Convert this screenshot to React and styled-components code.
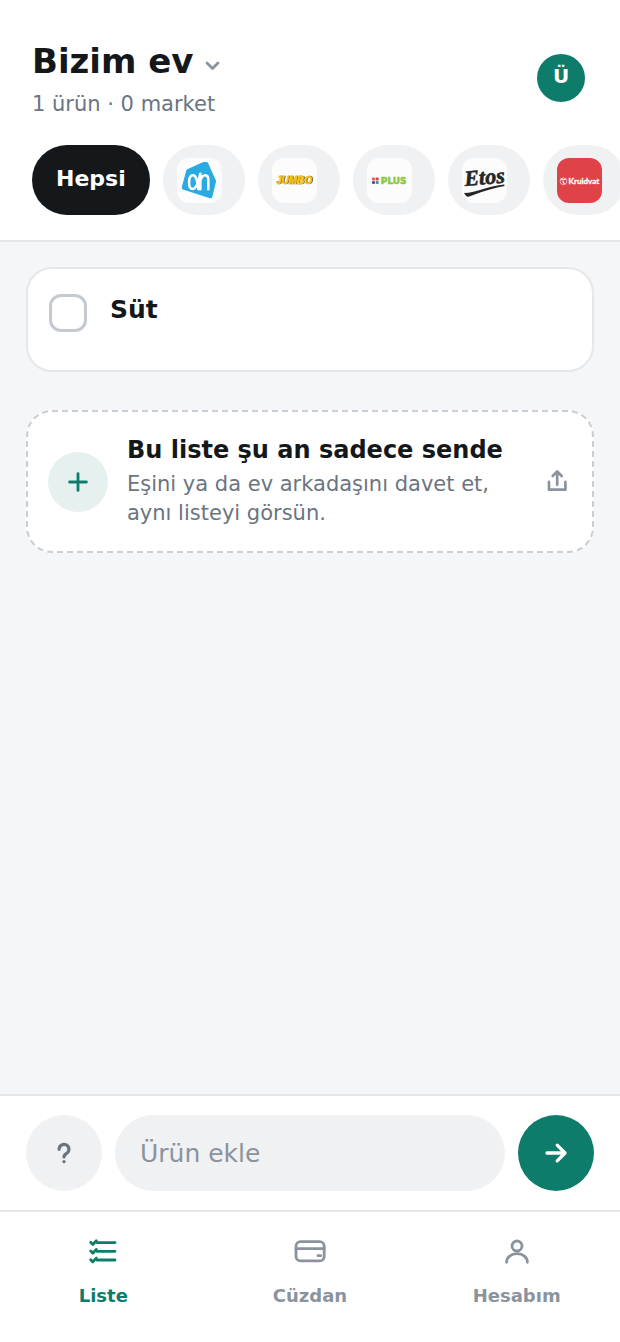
import React, { useState } from "react";
import styled, { createGlobalStyle } from "styled-components";

const GlobalStyle = createGlobalStyle`
    * {
        box-sizing: border-box;
    }
    body {
        margin: 0;
        background: #f4f6f8;
        color: #14181b;
        font-family: "DejaVu Sans", sans-serif;
    }
    button,
    input {
        font-family: inherit;
    }
    button {
        border: 0;
        padding: 0;
        cursor: pointer;
    }
`;

const Page = styled.div`
    display: flex;
    flex-direction: column;
    min-height: 100vh;
`;

const Header = styled.header`
    background: #fff;
    border-bottom: 2px solid #e4e7eb;
    padding: 39px 0 25px 32px;
`;

const TopRow = styled.div`
    display: flex;
    align-items: center;
    justify-content: space-between;
    padding-right: 35px;
    margin-bottom: 28px;
`;

const Title = styled.h1`
    margin: 0 0 8px;
    font-size: 34px;
    line-height: 44px;
`;

const TitleButton = styled.button`
    display: flex;
    align-items: center;
    gap: 8px;
    background: none;
    color: inherit;
    font-size: inherit;
    font-weight: 700;
    line-height: inherit;

    svg {
        color: #8a939e;
        margin-top: 8px;
    }
`;

const Subtitle = styled.p`
    margin: 0;
    color: #6b7580;
    font-size: 21px;
    line-height: 26px;
`;

const Avatar = styled.button`
    width: 48px;
    height: 48px;
    padding-bottom: 4px;
    border-radius: 50%;
    background: #0e7c6a;
    color: #fff;
    font-size: 20px;
    font-weight: 700;
`;

const Chips = styled.div`
    display: flex;
    gap: 13px;
    overflow-x: auto;
    scrollbar-width: none;
`;

const Chip = styled.button`
    flex: none;
    height: 70px;
    border-radius: 35px;
    background: #f0f1f3;
`;

const AllChip = styled(Chip)`
    padding: 0 24px 3px;
    background: #14181b;
    color: #fff;
    font-size: 22px;
    font-weight: 700;
`;

const StoreChip = styled(Chip)`
    width: 82px;
    padding-left: 14px;
`;

const LogoBox = styled.span`
    display: block;
    width: 45px;
    height: 45px;
    border-radius: 12px;
    overflow: hidden;
    background: ${props => props.$color || "#fcfcfd"};

    svg {
        display: block;
    }
`;

const JumboText = styled.text`
    fill: #fcc419;
    stroke: #fcc419;
    stroke-width: 0.5px;
    font: italic 700 10px "Liberation Sans", sans-serif;
    filter: drop-shadow(1px 0.5px 0 #6f6a4c);
`;

const Main = styled.main`
    flex: 1;
    display: flex;
    flex-direction: column;
    gap: 38px;
    padding: 25px 26px;
`;

const Items = styled.ul`
    list-style: none;
    margin: 0;
    padding: 0;
`;

const Item = styled.li`
    min-height: 105px;
    padding: 25px 21px;
    background: #fff;
    border: 2px solid #e4e7eb;
    border-radius: 26px;
`;

const ItemLabel = styled.label`
    display: flex;
    align-items: flex-start;
    gap: 23px;
    font-size: 25px;
    font-weight: 700;
    line-height: 32px;
`;

const Checkbox = styled.input`
    appearance: none;
    flex: none;
    width: 38px;
    height: 38px;
    margin: 0;
    border: 3px solid #c5cad1;
    border-radius: 12px;

    &:checked {
        background: #0e7c6a;
        border-color: #0e7c6a;
    }
`;

const Invite = styled.button`
    display: flex;
    align-items: center;
    gap: 19px;
    width: 100%;
    min-height: 143px;
    padding: 23px 21px 23px 20px;
    background: #fff;
    border: 2px dashed #c9ced4;
    border-radius: 26px;
    color: inherit;
    text-align: left;
`;

const PlusCircle = styled.span`
    flex: none;
    display: grid;
    place-items: center;
    width: 60px;
    height: 60px;
    border-radius: 50%;
    background: #e6f1ef;
    color: #0e7c6a;
`;

const InviteText = styled.span`
    flex: 1;
    display: flex;
    flex-direction: column;
    gap: 6px;
    color: #6b7580;
    font-size: 21px;
    line-height: 29px;

    strong {
        color: #14181b;
        font-size: 24px;
        line-height: 28px;
    }
`;

const ShareIcon = styled.span`
    flex: none;
    display: flex;
    color: #8a939e;
`;

const AddBar = styled.form`
    display: flex;
    gap: 13px;
    padding: 19px 26px;
    background: #fff;
    border-top: 2px solid #e4e7eb;
`;

const RoundButton = styled.button`
    flex: none;
    display: grid;
    place-items: center;
    width: 76px;
    height: 76px;
    border-radius: 50%;
    background: ${props => (props.$primary ? "#0e7c6a" : "#f0f1f3")};
    color: ${props => (props.$primary ? "#fff" : "#6b7580")};
`;

const AddInput = styled.input`
    flex: 1;
    min-width: 0;
    height: 76px;
    padding: 0 25px;
    border: 0;
    border-radius: 38px;
    background: #f0f1f3;
    color: #14181b;
    font-size: 25px;

    &::placeholder {
        color: #8a939e;
        opacity: 1;
    }
`;

const Nav = styled.nav`
    display: grid;
    grid-template-columns: repeat(3, 1fr);
    padding: 23px 0 35px;
    background: #fff;
    border-top: 2px solid #e4e7eb;
`;

const NavLink = styled.a`
    display: flex;
    flex-direction: column;
    align-items: center;
    gap: 18px;
    color: ${props => (props.$active ? "#0e7c6a" : "#8a939e")};
    font-size: 18px;
    font-weight: 700;
    line-height: 22px;
    text-decoration: none;
`;

const Icon = ({ size, stroke, children }) => (
    <svg
        width={size}
        height={size}
        viewBox={`0 0 ${size} ${size}`}
        fill="none"
        stroke="currentColor"
        strokeWidth={stroke}
        strokeLinecap="round"
        strokeLinejoin="round"
        aria-hidden="true"
    >
        {children}
    </svg>
);

const AhLogo = () => (
    <svg width="45" height="45" viewBox="0 0 45 45">
        <path
            d="M27 5.6 11 12.7 6.4 29.8 33.6 38.6 37.4 23.2 29.5 5.6Z"
            fill="#29abe2"
            stroke="#29abe2"
            strokeWidth="3.4"
            strokeLinejoin="round"
        />
        <path
            d="M23.3 31.2V15.8C22.5 21 19.500 31 15.600 31c-2.400 0-3.500-2.600-3.500-6.600s1.200-7.200 3.900-7.200c3.400 0 4.500 6.600 5.400 14M23.300 22.500c1.200-3.600 3-5.300 5-5.300 2.600 0 3 2.200 3 5v9"
            fill="none"
            stroke="#fff"
            strokeWidth="2.6"
            strokeLinecap="round"
            strokeLinejoin="round"
        />
    </svg>
);

const JumboLogo = () => (
    <svg width="45" height="45" viewBox="0 0 45 45">
        <JumboText x="22" y="26" textAnchor="middle">
            JUMBO
        </JumboText>
    </svg>
);

const PlusLogo = () => (
    <svg width="45" height="45" viewBox="0 0 45 45">
        <rect x="5" y="19.4" width="3" height="3" rx="1" fill="#e8594f" />
        <rect x="8.7" y="19.4" width="3" height="3" rx="1" fill="#d9405c" />
        <rect x="5" y="23" width="3" height="3" rx="1" fill="#5a4a9c" />
        <rect x="8.7" y="23" width="3" height="3" rx="1" fill="#35a08c" />
        <text
            x="13.8"
            y="25.8"
            fill="#8cc63f"
            stroke="#8cc63f"
            strokeWidth="0.5"
            fontFamily="DejaVu Sans, sans-serif"
            fontWeight="700"
            fontSize="9"
        >
            PLUS
        </text>
    </svg>
);

const EtosLogo = () => (
    <svg width="45" height="45" viewBox="0 0 45 45">
        <text
            x="3"
            y="28"
            fill="#262626"
            stroke="#262626"
            strokeWidth="0.6"
            fontFamily="Liberation Serif, serif"
            fontStyle="italic"
            fontWeight="700"
            fontSize="22"
            transform="rotate(-5 3 28)"
        >
            Etos
        </text>
        <path
            d="M2 35C14 34.500 28 27.500 42 26.400c1 0 .6 1.600-.4 1.800C27 31 18 34.500 6.500 38.800 4 39 3.600 37 2 35Z"
            fill="#262626"
        />
    </svg>
);

const KruidvatLogo = () => (
    <svg width="45" height="45" viewBox="0 0 45 45">
        <circle cx="6.500" cy="23.300" r="3.400" fill="none" stroke="#f2b3b5" strokeWidth="1" />
        <path
            d="M3.600 21.400c2-1 3 .5 5 0M6 22.500c-.5 1.500.5 2.500 1.500 3.500"
            fill="none"
            stroke="#fff"
            strokeWidth="1.200"
        />
        <text
            x="11.500"
            y="26.300"
            fill="#fff"
            stroke="#fff"
            strokeWidth="0.300"
            fontFamily="Lato, sans-serif"
            fontWeight="700"
            fontSize="8"
        >
            Kruidvat
        </text>
    </svg>
);

const stores = [
    { name: "Albert Heijn", Logo: AhLogo },
    { name: "Jumbo", Logo: JumboLogo },
    { name: "Plus", Logo: PlusLogo },
    { name: "Etos", Logo: EtosLogo },
    { name: "Kruidvat", Logo: KruidvatLogo, color: "#e04347" }
];

const App = () => {
    const [done, setDone] = useState(false);
    const [text, setText] = useState("");

    return (
        <Page>
            <GlobalStyle />
            <Header>
                <TopRow>
                    <div>
                        <Title>
                            <TitleButton type="button">
                                Bizim ev
                                <Icon size={20} stroke={2.8}>
                                    <path d="M5 8l5.500 5.500L16 8" />
                                </Icon>
                            </TitleButton>
                        </Title>
                        <Subtitle>1 ürün · 0 market</Subtitle>
                    </div>
                    <Avatar type="button">Ü</Avatar>
                </TopRow>
                <Chips>
                    <AllChip type="button">Hepsi</AllChip>
                    {stores.map(({ name, Logo, color }) => (
                        <StoreChip key={name} type="button" aria-label={name}>
                            <LogoBox $color={color}>
                                <Logo />
                            </LogoBox>
                        </StoreChip>
                    ))}
                </Chips>
            </Header>

            <Main>
                <Items>
                    <Item>
                        <ItemLabel htmlFor="item-sut">
                            <Checkbox
                                id="item-sut"
                                type="checkbox"
                                checked={done}
                                onChange={() => setDone(!done)}
                            />
                            Süt
                        </ItemLabel>
                    </Item>
                </Items>
                <Invite type="button">
                    <PlusCircle>
                        <Icon size={24} stroke={2.8}>
                            <path d="M12 3.600v16.800M3.600 12h16.800" />
                        </Icon>
                    </PlusCircle>
                    <InviteText>
                        <strong>Bu liste şu an sadece sende</strong>
                        <span>
                            Eşini ya da ev arkadaşını davet et, aynı listeyi
                            görsün.
                        </span>
                    </InviteText>
                    <ShareIcon>
                        <Icon size={28} stroke={2.7}>
                            <path d="M6 13.800v7.900h16.400v-7.900M14.200 16.800V4M9.700 8l4.500-4.500L18.700 8" />
                        </Icon>
                    </ShareIcon>
                </Invite>
            </Main>

            <AddBar onSubmit={e => e.preventDefault()}>
                <RoundButton type="button" aria-label="Yardım">
                    <Icon size={24} stroke={3.2}>
                        <path d="M7.100 8.300a4.900 4.900 0 1 1 7.500 4.100c-1.800 1.100-2.600 1.900-2.600 3.600" />
                        <path d="M12 20.600v.1" />
                    </Icon>
                </RoundButton>
                <AddInput
                    type="text"
                    aria-label="Ürün ekle"
                    placeholder="Ürün ekle"
                    value={text}
                    onChange={e => setText(e.target.value)}
                />
                <RoundButton type="submit" $primary aria-label="Ekle">
                    <Icon size={24} stroke={3.3}>
                        <path d="M3 12h18M13.200 4.200l7.800 7.800-7.800 7.800" />
                    </Icon>
                </RoundButton>
            </AddBar>

            <Nav>
                <NavLink href="#liste" $active>
                    <Icon size={32} stroke={2.8}>
                        <path d="M10 7.600H28M10 16.300H28M10 25H28" />
                        <path d="M3.700 7.300l2.200 2.200 3.400-3.800M3.700 16l2.200 2.200 3.400-3.800M3.700 24.700l2.200 2.200 3.400-3.800" />
                    </Icon>
                    Liste
                </NavLink>
                <NavLink href="#cuzdan">
                    <Icon size={32} stroke={2.8}>
                        <rect x="2" y="6.700" width="28.200" height="19.200" rx="4.500" />
                        <path d="M2 13.700h28.200M24 20.700h2.700" />
                    </Icon>
                    Cüzdan
                </NavLink>
                <NavLink href="#hesabim">
                    <Icon size={32} stroke={2.8}>
                        <circle cx="16" cy="11" r="5" />
                        <path d="M5.600 27.300c0-5.200 4.500-8.600 10.400-8.600s10.400 3.400 10.400 8.600" />
                    </Icon>
                    Hesabım
                </NavLink>
            </Nav>
        </Page>
    );
};

export default App;
